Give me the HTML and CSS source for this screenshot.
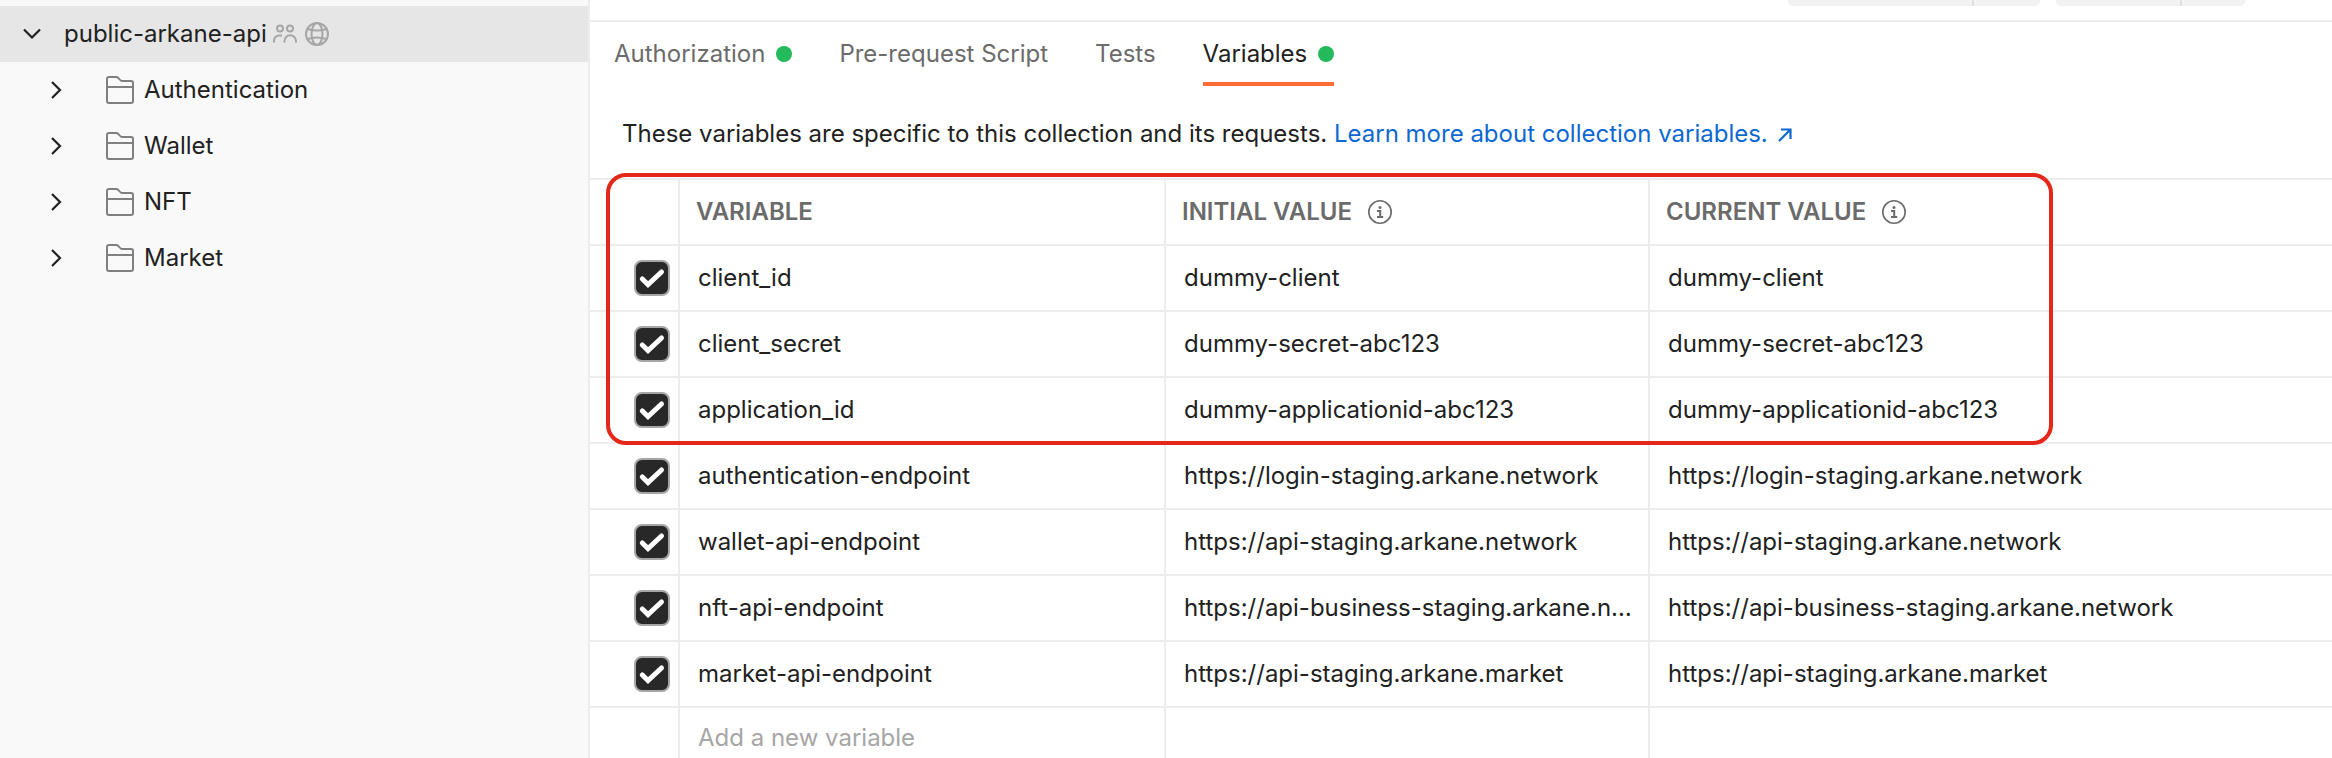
FILE: index.html
```html
<!DOCTYPE html>
<html lang="en">
<head>
<meta charset="utf-8">
<title>public-arkane-api</title>
<link rel="stylesheet" href="styles.css">
</head>
<body>
<svg class="defs" aria-hidden="true">
  <symbol id="chevron" viewBox="0 0 12 20"><path d="M2 2l8 8-8 8" fill="none" stroke="#212121" stroke-width="2.2"/></symbol>
  <symbol id="folder" viewBox="0 0 28 28"><path d="M1 25V3a2 2 0 0 1 2-2h7.500c2.500 0 3 4 5.500 4H25a2 2 0 0 1 2 2v18a2 2 0 0 1-2 2H3a2 2 0 0 1-2-2zM1 11h26" fill="none" stroke="#808080" stroke-width="2"/></symbol>
  <symbol id="info" viewBox="0 0 24 24"><circle cx="12" cy="12" r="11.200" fill="none" stroke="#6b6b6b" stroke-width="1.600"/><circle cx="12" cy="7.400" r="1.500" fill="#6b6b6b"/><path d="M9 11h3.200v6M9 17h6.200" fill="none" stroke="#6b6b6b" stroke-width="2"/></symbol>
</svg>
<div class="app">
  <nav class="sidebar" aria-label="Collections">
    <button class="collection" aria-expanded="true">
      <svg class="caret" viewBox="0 0 18 12"><path d="M1 1.500l8 8 8-8" fill="none" stroke="#212121" stroke-width="2.200"/></svg>
      <span class="collection-name">public-arkane-api</span>
      <span class="badges">
        <svg class="badge-icon" viewBox="0 0 24 24"><g fill="none" stroke="#a6a6a6" stroke-width="2"><circle cx="7" cy="6.500" r="3"/><circle cx="17" cy="6.500" r="3"/><path d="M1 20.500v-2a5 5 0 0 1 5-5h3M11.500 20.500v-1.500a5.750 5.750 0 0 1 11.500 0v1.500"/></g></svg>
        <svg class="badge-icon" viewBox="0 0 24 24"><g fill="none" stroke="#a6a6a6" stroke-width="2"><circle cx="12" cy="12" r="11"/><ellipse cx="12" cy="12" rx="5.500" ry="11"/><path d="M2.500 7c6 2 13 2 19 0M2.500 17c6-2 13-2 19 0"/></g></svg>
      </span>
    </button>
    <button class="folder"><svg class="chevron"><use href="#chevron"/></svg><svg class="folder-icon"><use href="#folder"/></svg><span>Authentication</span></button>
    <button class="folder"><svg class="chevron"><use href="#chevron"/></svg><svg class="folder-icon"><use href="#folder"/></svg><span>Wallet</span></button>
    <button class="folder"><svg class="chevron"><use href="#chevron"/></svg><svg class="folder-icon"><use href="#folder"/></svg><span>NFT</span></button>
    <button class="folder"><svg class="chevron"><use href="#chevron"/></svg><svg class="folder-icon"><use href="#folder"/></svg><span>Market</span></button>
  </nav>
  <main class="content">
    <div class="toolbar">
      <div class="split"><span class="split-main"></span><span class="split-side"></span></div>
      <div class="split"><span class="split-main small"></span><span class="split-side"></span></div>
    </div>
    <div class="tabs" role="tablist">
      <button class="tab" role="tab">Authorization<span class="dot"></span></button>
      <button class="tab" role="tab">Pre-request Script</button>
      <button class="tab" role="tab">Tests</button>
      <button class="tab active" role="tab" aria-selected="true">Variables<span class="dot"></span></button>
    </div>
    <p class="description">These variables are specific to this collection and its requests. <a href="#">Learn more about collection variables.<svg class="external" viewBox="0 0 14 14"><path d="M1 13L12 2M3 1.500h9.500V11" fill="none" stroke="currentColor" stroke-width="2.200"/></svg></a></p>
    <div class="table-wrap">
      <table class="variables">
        <colgroup><col class="col-check"><col class="col-name"><col class="col-initial"><col></colgroup>
        <thead>
          <tr><th></th><th>VARIABLE</th><th><span class="head">INITIAL VALUE<svg class="info"><use href="#info"/></svg></span></th><th><span class="head">CURRENT VALUE<svg class="info"><use href="#info"/></svg></span></th></tr>
        </thead>
        <tbody>
          <tr><td><input type="checkbox" checked aria-label="client_id"></td><td>client_id</td><td>dummy-client</td><td>dummy-client</td></tr>
          <tr><td><input type="checkbox" checked aria-label="client_secret"></td><td>client_secret</td><td>dummy-secret-abc123</td><td>dummy-secret-abc123</td></tr>
          <tr><td><input type="checkbox" checked aria-label="application_id"></td><td>application_id</td><td>dummy-applicationid-abc123</td><td>dummy-applicationid-abc123</td></tr>
          <tr><td><input type="checkbox" checked aria-label="authentication-endpoint"></td><td>authentication-endpoint</td><td>https://login-staging.arkane.network</td><td>https://login-staging.arkane.network</td></tr>
          <tr><td><input type="checkbox" checked aria-label="wallet-api-endpoint"></td><td>wallet-api-endpoint</td><td>https://api-staging.arkane.network</td><td>https://api-staging.arkane.network</td></tr>
          <tr><td><input type="checkbox" checked aria-label="nft-api-endpoint"></td><td>nft-api-endpoint</td><td>https://api-business-staging.arkane.network</td><td>https://api-business-staging.arkane.network</td></tr>
          <tr><td><input type="checkbox" checked aria-label="market-api-endpoint"></td><td>market-api-endpoint</td><td>https://api-staging.arkane.market</td><td>https://api-staging.arkane.market</td></tr>
          <tr class="new-row"><td></td><td><input class="new-variable" type="text" placeholder="Add a new variable" aria-label="Add a new variable"></td><td></td><td></td></tr>
        </tbody>
      </table>
      <div class="highlight"></div>
    </div>
  </main>
</div>
</body>
</html>
```
FILE: styles.css
```css
* { box-sizing: border-box; }

body {
  margin: 0;
  background: #fff;
  color: #212121;
  font-family: Inter, "Liberation Sans", sans-serif;
  font-size: 24px;
  line-height: 32px;
}

button, input { font: inherit; color: inherit; }
button { border: 0; background: none; padding: 0; text-align: left; }
svg { display: block; flex: none; }
.defs { position: absolute; width: 0; height: 0; }

.app { display: flex; height: 100vh; overflow: hidden; }

.sidebar {
  flex: none;
  width: 590px;
  padding-top: 6px;
  display: flex;
  flex-direction: column;
  background: #f9f9f9;
  border-right: 2px solid #ededed;
}

.collection, .folder { flex: none; display: flex; align-items: center; height: 56px; }
.collection { gap: 6px; padding-left: 23px; background: #e6e6e6; }
.caret { width: 18px; height: 12px; margin-right: 17px; }
.badges { display: flex; gap: 8px; }
.badge-icon { width: 24px; height: 24px; }
.folder { padding-left: 50px; }
.chevron { width: 12px; height: 20px; margin-right: 44px; }
.folder-icon { width: 28px; height: 28px; margin-right: 10px; }

.content { flex: 1; min-width: 0; }

.toolbar {
  display: flex;
  justify-content: flex-end;
  align-items: flex-start;
  gap: 16px;
  height: 22px;
  padding-right: 87px;
  border-bottom: 2px solid #ededed;
}
.split { display: flex; gap: 2px; height: 6px; border-radius: 0 0 8px 8px; overflow: hidden; background: #e0e0e0; }
.split-main { width: 184px; background: #f2f2f2; }
.split-main.small { width: 124px; }
.split-side { width: 66px; background: #f2f2f2; }
.split-main.small + .split-side { width: 63px; }

.tabs { display: flex; gap: 47px; padding-left: 24px; height: 64px; }
.tab { display: flex; align-items: center; gap: 11px; color: #6b6b6b; border-bottom: 4px solid transparent; padding-top: 4px; }
.tab.active { color: #212121; border-color: #ff6c37; }
.dot { width: 16px; height: 16px; border-radius: 50%; background: #24b95a; }

.description { margin: 0; padding: 32px 32px 28px; white-space: nowrap; }
.description a { color: #0e68d2; text-decoration: none; }
.external { display: inline-block; width: 14px; height: 14px; margin-left: 10px; }

.table-wrap { position: relative; }
.variables { width: 100%; table-layout: fixed; border-collapse: separate; border-spacing: 0; border-top: 2px solid #ededed; }
.col-check { width: 90px; }
.col-name { width: 486px; }
.col-initial { width: 484px; }

th, td {
  height: 66px;
  padding: 0 10px 0 18px;
  border-right: 2px solid #ededed;
  border-bottom: 2px solid #ededed;
  text-align: left;
  white-space: nowrap;
  overflow: hidden;
  text-overflow: ellipsis;
}
th { padding: 0 16px; color: #6b6b6b; font-weight: 600; }
th:last-child, td:last-child { border-right: 0; }
td:first-child { padding: 0 8px 0 44px; }
.head { display: flex; align-items: center; gap: 16px; }
.info { width: 24px; height: 24px; }

input[type="checkbox"] {
  appearance: none;
  display: block;
  width: 36px;
  height: 36px;
  margin: 0;
  border: 2px solid #a6a6a6;
  border-radius: 8px;
  background: #282828 url("data:image/svg+xml,%3Csvg xmlns='http://www.w3.org/2000/svg' viewBox='0 0 32 32'%3E%3Cpath d='M6.300 17l5.700 5.500L25.500 10' fill='none' stroke='white' stroke-width='5' stroke-linecap='round'/%3E%3C/svg%3E") center / 32px 32px no-repeat;
}

.new-row td { height: 60px; border-bottom: 0; }
.new-variable { display: block; width: 100%; padding: 0; border: 0; outline: 0; background: none; }
.new-variable::placeholder { color: #a6a6a6; opacity: 1; }

/* Outline around the values the reader has to fill in */
.highlight {
  position: absolute;
  top: -5px;
  left: 16px;
  width: 1447px;
  height: 272px;
  border: 4px solid #e32718;
  border-radius: 20px;
  pointer-events: none;
}
```
